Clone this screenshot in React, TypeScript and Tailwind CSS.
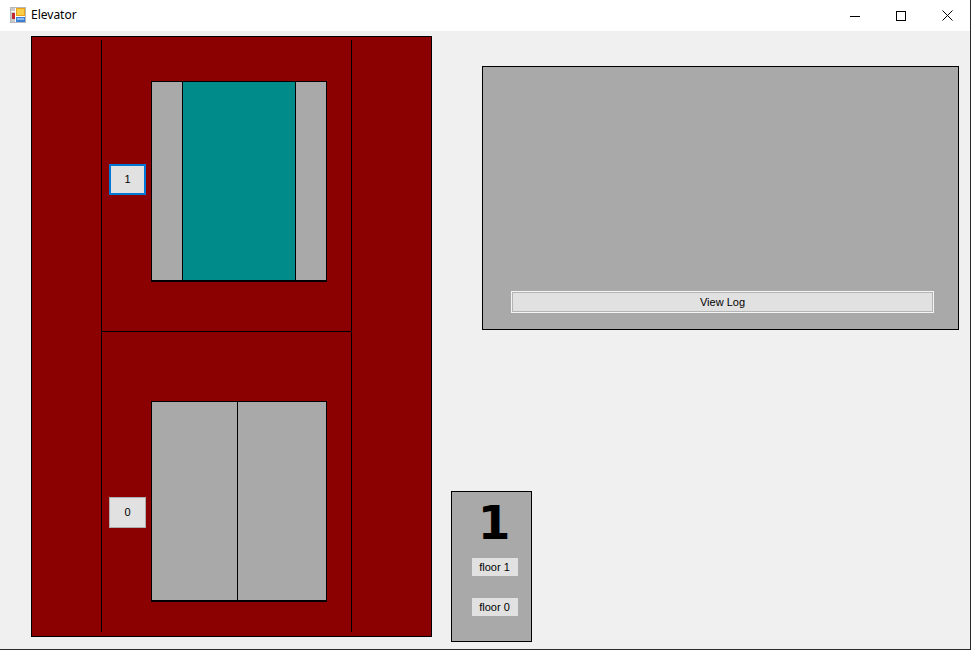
import React from "react";

const FONT = { fontFamily: '"Liberation Sans", Arial, sans-serif' };

function AppIcon() {
  return (
    <svg width="16" height="16" viewBox="0 0 16 16" className="shrink-0">
      <rect x="0.5" y="0.5" width="15" height="15" fill="#ffffff" stroke="#b8b8b8" />
      <rect x="1" y="1" width="4" height="3" fill="#c8c8c8" />
      <rect x="1" y="5" width="4" height="10" fill="#c8c8c8" />
      <rect x="2" y="6" width="3" height="6" fill="#c0282d" />
      <rect x="6" y="1" width="9" height="8" fill="#e8a317" />
      <rect x="7" y="2" width="7" height="6" fill="#f7cd4a" />
      <rect x="6" y="10" width="9" height="5" fill="#3b7fd4" />
      <rect x="7" y="11" width="7" height="2" fill="#8fb8ee" />
    </svg>
  );
}

function TitleBar() {
  return (
    <div className="flex h-[31px] items-center bg-white">
      <div className="ml-[10px] mt-[-1px]">
        <AppIcon />
      </div>
      <span className="ml-[5px] mt-[-1px] text-[12px] text-black" style={{ fontFamily: '"Noto Sans", sans-serif' }}>
        Elevator
      </span>
      <div className="ml-auto flex h-full">
        <div className="flex w-[46px] items-center justify-center">
          <svg width="10" height="10" viewBox="0 0 10 10">
            <line x1="0" y1="5.5" x2="10" y2="5.5" stroke="#000" strokeWidth="1" />
          </svg>
        </div>
        <div className="flex w-[46px] items-center justify-center">
          <svg width="10" height="10" viewBox="0 0 10 10">
            <rect x="0.5" y="0.5" width="9" height="9" fill="none" stroke="#000" strokeWidth="1" />
          </svg>
        </div>
        <div className="flex w-[46px] items-center justify-center">
          <svg width="11" height="11" viewBox="0 0 11 11">
            <path d="M0.5 0.5 L10.5 10.5 M10.5 0.5 L0.5 10.5" stroke="#000" strokeWidth="1" />
          </svg>
        </div>
      </div>
    </div>
  );
}

function FloorButton({ label, focused }: { label: string; focused?: boolean }) {
  return (
    <div
      className={`flex h-[31px] w-[37px] shrink-0 items-center justify-center bg-[#e1e1e1] text-[11px] text-black ${
        focused ? "border-2 border-[#0078d7]" : "border border-[#adadad]"
      }`}
      style={FONT}
    >
      {label}
    </div>
  );
}

function OpenDoor() {
  return (
    <div className="flex h-[201px] w-[176px] shrink-0 border border-b-2 border-black">
      <div className="w-[30px] bg-[#a9a9a9]" />
      <div className="w-[114px] border-x border-black bg-[#008b8b]" />
      <div className="w-[30px] bg-[#a9a9a9]" />
    </div>
  );
}

function ClosedDoor() {
  return (
    <div className="flex h-[201px] w-[176px] shrink-0 border border-b-2 border-black">
      <div className="w-[86px] border-r border-black bg-[#a9a9a9]" />
      <div className="flex-1 bg-[#a9a9a9]" />
    </div>
  );
}

function Shaft() {
  return (
    <div className="h-[601px] w-[401px] shrink-0 border border-black bg-[#8b0000]">
      <div className="ml-[69px] mt-[3px] flex h-[592px] w-[251px] flex-col border-x border-black">
        <div className="flex h-[292px] shrink-0 items-start border-b border-black">
          <div className="ml-[7px] mt-[124px]">
            <FloorButton label="1" focused />
          </div>
          <div className="ml-[5px] mt-[41px]">
            <OpenDoor />
          </div>
        </div>
        <div className="flex flex-1 items-start">
          <div className="ml-[7px] mt-[165px]">
            <FloorButton label="0" />
          </div>
          <div className="ml-[5px] mt-[69px]">
            <ClosedDoor />
          </div>
        </div>
      </div>
    </div>
  );
}

function LogPanel() {
  return (
    <div className="flex h-[264px] w-[477px] flex-col border border-black bg-[#a9a9a9]">
      <div
        className="ml-[28px] mt-[224px] flex h-[22px] w-[423px] items-center justify-center border border-[#f4f4f4] bg-[#e1e1e1] text-[11px] text-black shadow-[inset_0_0_0_1px_#b4b4b4]"
        style={FONT}
      >
        View Log
      </div>
    </div>
  );
}

function CarPanel() {
  return (
    <div className="flex h-[151px] w-[81px] flex-col items-center border border-black bg-[#a9a9a9]">
      <div
        className="ml-[5px] mt-[5px] h-[52px] text-[47px] font-bold leading-[52px] text-black"
        style={{ fontFamily: '"DejaVu Sans", sans-serif' }}
      >
        1
      </div>
      <div className="flex flex-col items-center gap-[22px] pt-[9px]">
        {["floor 1", "floor 0"].map((f) => (
          <div
            key={f}
            className="ml-[6px] flex h-[18px] w-[46px] items-center justify-center bg-[#e1e1e1] text-[11px] text-black"
            style={FONT}
          >
            {f}
          </div>
        ))}
      </div>
    </div>
  );
}

export default function App() {
  return (
    <div className="flex h-[650px] w-[971px] flex-col border-b border-r border-[#2b2b2b] bg-[#f0f0f0]">
      <TitleBar />
      <div className="flex flex-1">
        <div className="ml-[31px] mt-[5px]">
          <Shaft />
        </div>
        <div className="flex flex-col items-start">
          <div className="ml-[50px] mt-[35px]">
            <LogPanel />
          </div>
          <div className="ml-[19px] mt-[161px]">
            <CarPanel />
          </div>
        </div>
      </div>
    </div>
  );
}
